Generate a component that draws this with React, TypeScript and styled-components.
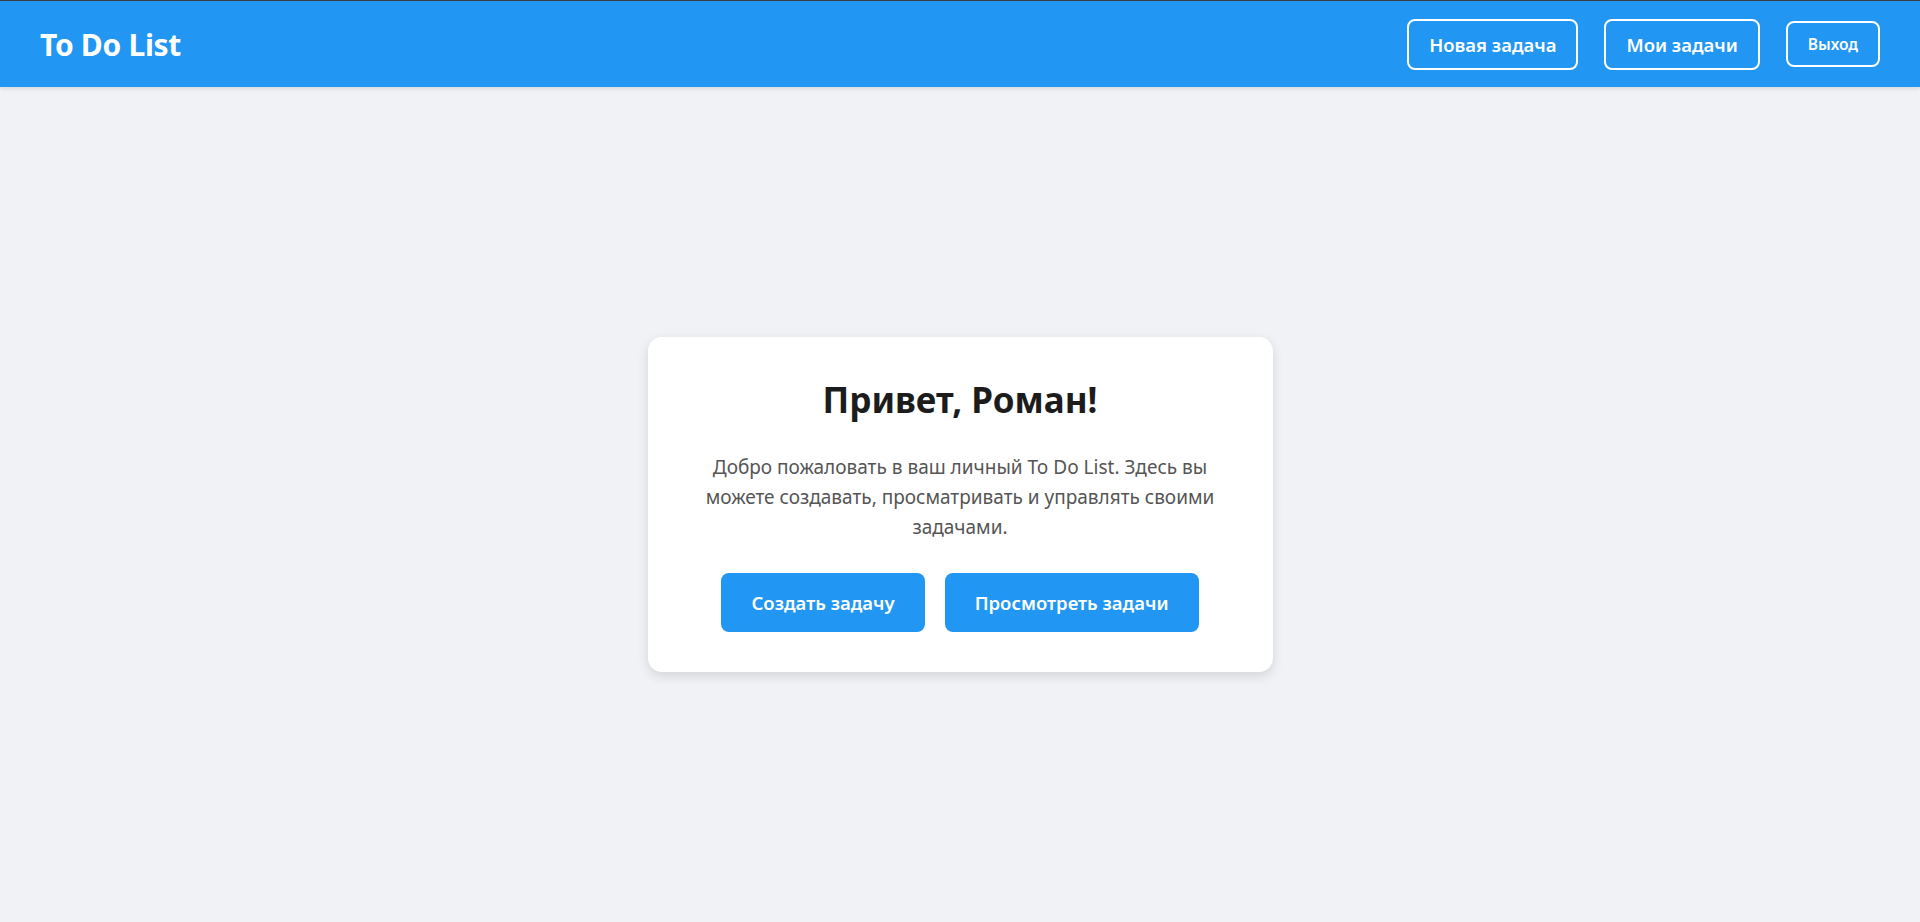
import React from 'react';
import styled, { createGlobalStyle } from 'styled-components';

const GlobalStyle = createGlobalStyle`
    * {
        box-sizing: border-box;
    }
    body {
        margin: 0;
        font-family: 'Noto Sans', 'Open Sans', sans-serif;
        background: #f0f2f5;
    }
`;

const Page = styled.div`
    min-height: 100vh;
    display: flex;
    flex-direction: column;
`;

const Header = styled.header`
    height: 87px;
    flex-shrink: 0;
    display: flex;
    align-items: center;
    justify-content: space-between;
    padding: 0 40px;
    background: #2196f3;
    border-top: 1px solid #3a3d42;
    box-shadow: 0 2px 4px rgba(0, 0, 0, 0.1);
`;

const Logo = styled.a`
    color: #fff;
    font-size: 30px;
    font-weight: 700;
    text-decoration: none;
    letter-spacing: -0.3px;
`;

const Nav = styled.nav`
    display: flex;
    align-items: center;
    gap: 26px;
`;

const NavButton = styled.a<{ small?: boolean }>`
    display: inline-flex;
    align-items: center;
    justify-content: center;
    height: ${(props) => (props.small ? '46px' : '51px')};
    padding: 0 20px;
    border: 2px solid #fff;
    border-radius: 8px;
    color: #fff;
    font-size: ${(props) => (props.small ? '15.5px' : '18.5px')};
    font-weight: 600;
    cursor: pointer;
    text-decoration: none;
`;

const Main = styled.main`
    flex: 1;
    display: flex;
    align-items: center;
    justify-content: center;
`;

const Card = styled.section`
    width: 625px;
    padding: 40px 48px;
    background: #fff;
    border-radius: 14px;
    box-shadow: 0 4px 12px rgba(0, 0, 0, 0.12);
    text-align: center;
`;

const Title = styled.h1`
    margin: 0 0 30px;
    font-size: 35px;
    line-height: 1.3;
    font-weight: 700;
    color: #1c1c1c;
`;

const Text = styled.p`
    margin: 0 0 31px;
    font-size: 19px;
    line-height: 30px;
    color: #555;
`;

const Actions = styled.div`
    display: flex;
    justify-content: center;
    gap: 20px;
`;

const ActionButton = styled.button`
    height: 59px;
    padding: 0 30px;
    border: none;
    border-radius: 8px;
    background: #2196f3;
    color: #fff;
    font-family: inherit;
    font-size: 18.5px;
    font-weight: 600;
    cursor: pointer;
`;

export default function App() {
    return (
        <>
            <GlobalStyle />
            <Page>
                <Header>
                    <Logo href="#">To Do List</Logo>
                    <Nav>
                        <NavButton>Новая задача</NavButton>
                        <NavButton>Мои задачи</NavButton>
                        <NavButton small>Выход</NavButton>
                    </Nav>
                </Header>
                <Main>
                    <Card>
                        <Title>Привет, Роман!</Title>
                        <Text>
                            Добро пожаловать в ваш личный To Do List. Здесь вы
                            можете создавать, просматривать и управлять своими
                            задачами.
                        </Text>
                        <Actions>
                            <ActionButton>Создать задачу</ActionButton>
                            <ActionButton>Просмотреть задачи</ActionButton>
                        </Actions>
                    </Card>
                </Main>
            </Page>
        </>
    );
}
